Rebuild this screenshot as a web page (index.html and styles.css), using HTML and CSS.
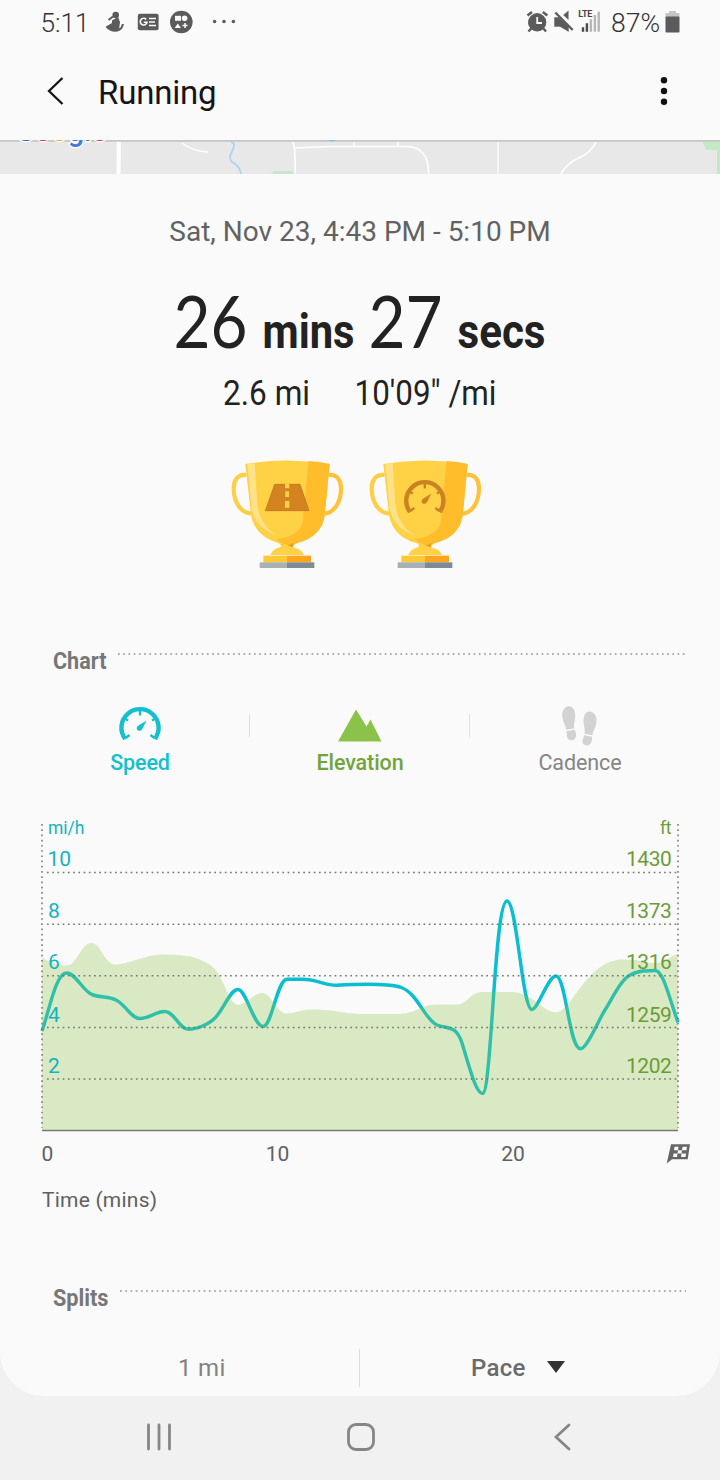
FILE: index.html
```html
<!DOCTYPE html>
<html lang="en">
<head>
<meta charset="utf-8">
<title>Running</title>
<link rel="stylesheet" href="styles.css">
</head>
<body>
<svg class="defs" width="0" height="0" aria-hidden="true">
  <defs>
    <g id="cup">
      <path d="M80 90C51 87 41 108 41 130C41 172 62 206 98 206" fill="none" stroke="#ffce47" stroke-width="12.500"/>
      <path d="M325 90C353 87 363 108 363 130C363 172 343 206 307 207" fill="none" stroke="#ffc33b" stroke-width="12.500"/>
      <path d="M76 57Q200 36 329 57L315 202C312 256 275 284 226 296Q216 301 222 309H180Q188 299 175 294C132 283 96 252 92 200Z" fill="#ffd145"/>
      <path d="M266 48Q300 50 329 57L315 202C312 256 275 284 226 296L215 307L190 297Q180 289 168 283C225 277 254 250 250 208Z" fill="#ffbc2b"/>
      <path d="M82 57L104 55L112 174C116 219 135 249 168 270C126 256 98 224 94 184Z" fill="#ffe187"/>
      <path d="M180 296Q202 306 221 294Q215 301 218 310L202 302Z" fill="#e99b23"/>
      <path d="M151 330Q157 312 182 306Q191 302 190 295L216 307Q244 311 252 330Z" fill="#ffd145"/>
      <path d="M130 332H201V352H130Z" fill="#ffc936"/><path d="M201 332H273V352H201Z" fill="#fda51e"/>
      <path d="M119 352H201V369H119Z" fill="#a7b1b4"/><path d="M201 352H283V369H201Z" fill="#7c8b94"/>
    </g>
    <g id="gauge">
      <path d="M7.200 34A18.600 18.600 0 1 1 36.800 34" fill="none" stroke="currentColor" stroke-width="4.400"/>
      <path d="M22 6V10.500M7.500 14L10 15.500M36.500 14L34 15.500M7.500 33L11.500 30M36.500 33L32.500 30" stroke="currentColor" stroke-width="2.400"/>
      <path d="M28.500 15.500L24.300 24C23 26.300 20 26.400 19 24.300C18.500 22.900 18.800 21.700 19.800 20.900Z" fill="currentColor"/>
    </g>
  </defs>
</svg>

<div class="phone">
  <div class="status">
    <svg class="status-icons" viewBox="0 0 720 46">
      <g class="status-text"><text x="40.5" y="32" font-size="26" textLength="49" lengthAdjust="spacingAndGlyphs">5:11</text><text x="611" y="32" font-size="26" textLength="49" lengthAdjust="spacingAndGlyphs">87%</text></g>
      <g fill="#5b5b5b">
        <circle cx="115.700" cy="15" r="3.300"/>
        <path d="M112 20.500L118 17L120 22L119 30Q112 33 106 26.500L112 23Z"/>
        <path d="M108.500 20L113 16.500M106.500 26.500Q113 33 119.500 29.500Q122.500 28 122.800 24" fill="none" stroke="#5b5b5b" stroke-width="2"/>
        <rect x="137.800" y="13.700" width="20.800" height="16.500" rx="2"/>
        <circle cx="181.300" cy="22" r="11.300"/>
        <circle cx="214.600" cy="21.500" r="1.800"/><circle cx="224" cy="21.500" r="1.800"/><circle cx="233.400" cy="21.500" r="1.800"/>
      </g>
      <path d="M146.200 19.400A3.400 3.400 0 1 0 147 22.200H143.800M149 18.500H156M149 22H155M149 25.500H156" fill="none" stroke="#fafafa" stroke-width="1.600"/>
      <g fill="#fafafa"><path d="M175 15.800H181V20.800H175Z"/><circle cx="184.600" cy="18.300" r="2.800"/><path d="M177.800 23.500L181 28H174.700Z"/></g>
      <path d="M185 23V28M182.500 25.500H187.500" stroke="#fafafa" stroke-width="1.500"/>
      <g fill="#5b5b5b" stroke="#5b5b5b">
        <circle cx="537.200" cy="22.300" r="8.700"/>
        <path d="M527.500 15.500L532 12M547.300 15.500L542.800 12M531.500 28L528.500 31.500M543 28L546 31.500" stroke-width="2.400"/>
        <path d="M554.500 17.500H559L568.500 27V31.500L560 26.500H554.500Z M563.500 15L568.300 11V19.500Z" stroke-width=".4"/>
        <path d="M555.300 12.500L572.700 30" stroke-width="2.400"/>
      </g>
      <path d="M537.200 17V23H542" fill="none" stroke="#fafafa" stroke-width="1.800"/>
      <text x="578.300" y="17" font-family="Roboto" font-weight="700" font-size="9" textLength="14" fill="#444">LTE</text>
      <path d="M583 31.700V27.300M586.900 31.700V23.300" stroke="#4a4a4a" stroke-width="2.400"/>
      <path d="M590.900 31.700V19.300M594.900 31.700V15M598.700 31.700V11.700" stroke="#b6b6b6" stroke-width="2.400"/>
      <path d="M669 11H676V13H679.500V17H665.500V13H669Z" fill="#c5c5c5"/><rect x="665.500" y="16.500" width="14" height="16" rx="1" fill="#5b5b5b"/>
    </svg>
  </div>

  <header class="appbar">
    <svg class="back" viewBox="0 0 18 28"><path d="M16.500 1L3 14L16.500 27" fill="none" stroke="#151515" stroke-width="2.300"/></svg>
    <h1 class="title">Running</h1>
    <svg class="more" viewBox="0 0 8 30"><g fill="#111"><circle cx="4" cy="4.200" r="3.200"/><circle cx="4" cy="15" r="3.200"/><circle cx="4" cy="25.700" r="3.200"/></g></svg>
  </header>

  <svg class="map" viewBox="0 0 720 34">
    <rect width="720" height="34" fill="#e8e8e8"/>
    <g fill="none" stroke="#fff" stroke-width="1.600">
      <path d="M118.700 0V16L118.500 34" stroke-width="4"/><path d="M182 3Q192 11 208 12"/>
      <path d="M293 0Q296 15 295 34M295 8L330 6.500H408Q429 8 428.500 34M398 0V7"/><path d="M354 0V7M498 0V34" stroke-width="1.200"/>
      <path d="M597 0Q592 12 579 18Q568 22 561 34"/>
    </g>
    <path d="M230 0L234 4C235 11 226 16 232 22Q240 26 241 34" fill="none" stroke="#a8d5ef" stroke-width="1.800"/>
    <path d="M702 0H720V34H717V10H706Z" fill="#c5e8c5"/><path d="M271 34L274 31H292L295 34Z" fill="#c9e6cb"/>
    <path d="M0 .9H720" stroke="#c6c6c6" stroke-width="1.800"/>
    <circle cx="332" cy="-3" r="4.300" fill="#7cb9e8"/>
    <g class="map-logo"><text x="15" y=".800" textLength="92"><tspan fill="#3b5fc0">G</tspan><tspan fill="#d23b38">o</tspan><tspan fill="#e4b91d">o</tspan><tspan fill="#4879d4">g</tspan><tspan fill="#319a52">l</tspan><tspan fill="#d23b38">e</tspan></text></g>
  </svg>

  <section class="summary">
    <p class="date">Sat, Nov 23, 4:43 PM - 5:10 PM</p>
    <svg class="figures" viewBox="0 0 720 130">
      <g fill="#222">
        <g class="digits"><text x="173.500" y="68" textLength="74" lengthAdjust="spacingAndGlyphs">26</text><text x="368.500" y="68" textLength="74" lengthAdjust="spacingAndGlyphs">27</text></g>
        <g class="units"><text x="262.500" y="68" textLength="92" lengthAdjust="spacingAndGlyphs">mins</text><text x="457.500" y="68" textLength="88" lengthAdjust="spacingAndGlyphs">secs</text></g>
        <g class="sub"><text x="223" y="125" textLength="87" lengthAdjust="spacingAndGlyphs">2.6 mi</text><text x="354.500" y="125" textLength="142" lengthAdjust="spacingAndGlyphs">10'09" /mi</text></g>
      </g>
    </svg>
    <div class="trophies">
      <svg class="trophy" viewBox="0 0 405 405"><use href="#cup"/>
        <path d="M164 118H240L267 197H136Z" fill="#d38420" stroke="#b66d1c" stroke-width="2"/>
        <path d="M195 117H208V130H195ZM196 139H207V156H196ZM195 168H208V188H195Z" fill="#ffd145"/>
      </svg>
      <svg class="trophy" viewBox="0 0 405 405"><use href="#cup"/>
        <g class="badge-gauge" transform="translate(134.500 99) scale(3)"><use href="#gauge"/></g>
      </svg>
    </div>
  </section>

  <section class="chart-section">
    <div class="section-head">
      <svg class="section-name" viewBox="0 0 60 32"><text x="0" y="23.500" textLength="53.500" lengthAdjust="spacingAndGlyphs">Chart</text></svg>
      <svg class="rule" viewBox="0 0 570 4"><path d="M0 2H570"/></svg>
    </div>
    <div class="metrics">
      <div class="metric speed"><svg class="metric-icon" viewBox="0 0 44 42"><use href="#gauge"/></svg><span>Speed</span></div>
      <div class="metric elevation"><svg class="metric-icon" viewBox="0 0 44 42"><path d="M0 36.500L18 4.500L28.500 21.500L32.500 14.500L43.500 36.500Z" fill="#8bc34a"/></svg><span>Elevation</span></div>
      <div class="metric cadence"><svg class="metric-icon" viewBox="0 0 44 42"><g fill="#d2d2d2" transform="translate(0 -.8)"><path d="M10.500 2C14.500 1.500 17.500 6 17.200 12C17 17 15.500 20 16 24L8 25.500C8 21 4.500 18 4.300 11.500C4 6 7 2.300 10.500 2Z"/><path d="M8.500 27L16.500 25.500C19.500 31 18 35.500 14 36C10.500 36.300 8.800 33.500 9 31Z"/><path d="M32.500 7.500C28 6.500 25.500 12 25.500 17C25.500 22 27.500 25 26.500 29.500L34.500 31C34.500 27 38 23 38.500 18C39 12 36.500 8 32.500 7.500Z"/><path d="M26.300 31L34 32.500C34.500 37.500 32.500 41.500 29 41.200C24.500 41 23.500 37 25 34.500Z"/></g></svg><span>Cadence</span></div>
    </div>

    <svg class="chart" viewBox="0 810 720 410">
      <path class="speed-line" d="M42 1031C50 1008 56 973 66.500 973C76 973 83 992 93 995C103 998 108 996 116 1000C126 1005 131 1018.500 140 1018.500C149 1018.500 157 1011 165 1011.500C175 1012 179 1029.300 188.500 1029.300C196 1029.300 208 1025 215 1018C224 1009 230 989.500 238 989.500C246 989.500 254 1026.500 263 1026.500C272 1026.500 277 979.500 287 979.200H301C318 979 324 985.500 337 985.200C350 984.500 386 983 400 987C418 993 424 1019 437 1025C448 1029 456 1025 462 1043C470 1069 476 1093.500 482.500 1093.500C492 1093.500 494 901 507 901C517 901 522 1009.500 532 1009.500C538 1009.500 548 976 556 976C566 976 569 1048.800 580.500 1048.800C587 1048.800 598 1021 605 1010C613 997 621 980 630 975C638 970 646 971 655 970.500C663 970 669 997 678 1022.500"/>
      <path class="elevation-area" d="M42 957.500Q54 965.500 67 965.500C77 965.500 81 943 91.500 943C101 943 104 964.500 116 964.500C128 964.500 144 955 162 954.500C178 955 192 954 208 963.500C225 973 227 1004.800 238.500 1004.800C245 1004.800 254 993 262.500 993C271 993 277 1013.500 286.500 1013.500C295 1013.500 301 1009 313 1009.500C337 1009.500 342 1014 365 1014H396C417 1014 420 1005 435 1004.500H457C468 1004.500 470 992 482 992H505C516 992 517 992 525 995C537 1000 545 1012.200 556 1012.200C568 1012.200 577 985 599 968C611 959 620 959 636 960C646 963 658 965 667 960Q673 955 678 954V1130.500H42Z"/>
      <path class="grid" d="M47 872.500H677M47 924.200H677M47 975.800H677M47 1027.500H677M47 1079H677"/>
      <path class="grid" d="M42 824V1128M678 824V1128"/>
      <path d="M42 1130.500H678" stroke="#777b73" stroke-width="1.300"/>
      <g class="left-labels"><text class="unit" x="48" y="834">mi/h</text><text x="47.500" y="866">10</text><text x="48" y="918">8</text><text x="48" y="969">6</text><text x="48" y="1021.500">4</text><text x="48" y="1073">2</text></g>
      <g class="right-labels"><text class="unit" x="671" y="834">ft</text><text x="671.500" y="866">1430</text><text x="671.500" y="918">1373</text><text x="671.500" y="969">1316</text><text x="671.500" y="1021.500">1259</text><text x="671.500" y="1073">1202</text></g>
      <g class="time-labels"><text x="47.500" y="1161">0</text><text x="277.500" y="1161">10</text><text x="513" y="1161">20</text><text class="caption" x="42" y="1207" textLength="115">Time (mins)</text></g>
      <g><path d="M671 1144.300H690L687.700 1159.300H672L666.700 1163.500Z" fill="#666"/>
        <path d="M674.500 1146.800H678.500L678 1150.200H674ZM682.500 1146.800H687L686.500 1150.200H682ZM678 1150.200H682L681.500 1153.600H677.500ZM673.500 1153.600H677.500L677 1157H673ZM681.500 1153.600H686L685.500 1157H681Z" fill="#fafafa"/></g>
    </svg>
  </section>

  <section class="splits">
    <div class="section-head">
      <svg class="section-name" viewBox="0 0 60 32"><text x="0" y="23.500" textLength="55.500" lengthAdjust="spacingAndGlyphs">Splits</text></svg>
      <svg class="rule" viewBox="0 0 570 4"><path d="M2 2H568"/></svg>
    </div>
    <div class="split-columns"><span class="distance">1 mi</span><span class="pace">Pace <i class="caret"></i></span></div>
  </section>

  <nav class="navbar">
    <svg viewBox="0 0 28 28"><path d="M3.500 2V26M14 2V26M24.500 2V26"/></svg>
    <svg viewBox="0 0 28 28"><rect x="1.500" y="1.500" width="25" height="25" rx="7.500"/></svg>
    <svg viewBox="0 0 28 28"><path d="M20 2L7 14L20 26"/></svg>
  </nav>
</div>
</body>
</html>
```
FILE: styles.css
```css
* { box-sizing: border-box; }
body { margin: 0; background: #f1f1f1; font-family: Roboto, "Liberation Sans", sans-serif; }
svg { display: block; flex: none; }
.defs { height: 0; }
.phone { width: 720px; height: 1480px; overflow: hidden; display: grid; grid-template-rows: 46px 94px 34px 451px 615px 156px 84px; }
.status, .appbar, .summary, .chart-section { background: #fafafa; }
.status-icons { width: 720px; height: 46px; }
.status-text { font-weight: 300; fill: #333; }
.appbar { display: flex; align-items: center; padding: 0 52px 4px 46px; }
.back { width: 18px; height: 28px; }
.title { flex: 1; margin: 3px 0 0 34px; font-size: 33px; line-height: 40px; font-weight: 400; color: #151515; letter-spacing: -.2px; }
.more { width: 8px; height: 30px; }
.map { width: 720px; height: 34px; }
.map-logo { font: 500 29px Roboto, sans-serif; stroke: #fff; stroke-width: 2.5px; paint-order: stroke; }
.summary { display: flex; flex-direction: column; padding-top: 41px; }
.date { margin: 0; text-align: center; font-size: 28px; line-height: 34px; color: #626262; white-space: nowrap; }
.figures { width: 720px; height: 130px; margin-top: 31px; }
.digits { font: 400 72px Lato, sans-serif; }
.units { font: 700 48px Roboto, sans-serif; }
.sub { font: 400 35px Roboto, sans-serif; }
.trophies { display: flex; gap: 3px; padding-left: 220px; margin-top: 35px; }
.trophy { width: 135px; height: 135px; }
.badge-gauge { color: #c98322; }
.chart-section { display: flex; flex-direction: column; padding-top: 20px; }
.section-head { display: flex; height: 36px; padding-left: 53px; }
.section-name { width: 60px; height: 32px; font: 700 24px Roboto, sans-serif; fill: #777; }
.rule { width: 570px; height: 4px; margin: 7px 0 0 5px; stroke: #929292; stroke-width: 1.5; stroke-dasharray: 1.7 3.53; }
.metrics { display: grid; grid-template-columns: repeat(3, 220px); padding-left: 30px; margin-top: 24px; height: 105px; }
.metric { display: flex; flex-direction: column; align-items: center; font-size: 21.5px; line-height: 28px; font-weight: 500; letter-spacing: -.1px; background: linear-gradient(#e0e0e0, #e0e0e0) no-repeat 100% 9px / 1.5px 23px; }
.metric:last-child { background: none; }
.metric-icon { width: 44px; height: 42px; margin-bottom: 2px; }
.speed { color: #14bfce; }
.elevation { color: #71a53a; }
.cadence { color: #858585; font-weight: 400; }
.chart { width: 720px; height: 410px; margin-top: 0; font-size: 21px; }
.speed-line { fill: none; stroke: #09bed0; stroke-width: 3.4; }
.elevation-area { fill: #8bc34a; fill-opacity: .3; }
.grid { fill: none; stroke: #74796e; stroke-width: 1.5; stroke-dasharray: 1.7 3.53; }
.left-labels { fill: #13b3c1; }
.right-labels { fill: #6d9c37; text-anchor: end; letter-spacing: -.4px; }
.unit { font-size: 17.5px; }
.time-labels { fill: #606060; text-anchor: middle; }
.time-labels .caption { text-anchor: start; }
.splits { background: #fafafa; border-radius: 0 0 44px 44px; padding-top: 42px; }
.split-columns { display: grid; grid-template-columns: 360px 360px; height: 35px; margin-top: 31px; line-height: 38px; font-size: 24px; color: #6a6a6a; }
.distance { padding-left: 178px; color: #828282; letter-spacing: .3px; border-right: 1px solid #ddd; }
.pace { display: flex; align-items: center; padding-left: 111px; font-weight: 500; letter-spacing: .3px; }
.caret { margin: -2px 0 0 21px; border: 9px solid transparent; border-top: 12px solid #333; border-bottom: 0; }
.navbar { background: #f1f1f1; display: flex; justify-content: space-between; padding: 27px 143px 0 145px; }
.navbar svg { width: 28px; height: 28px; fill: none; stroke: #868686; stroke-width: 2.8; stroke-linecap: round; }
```
